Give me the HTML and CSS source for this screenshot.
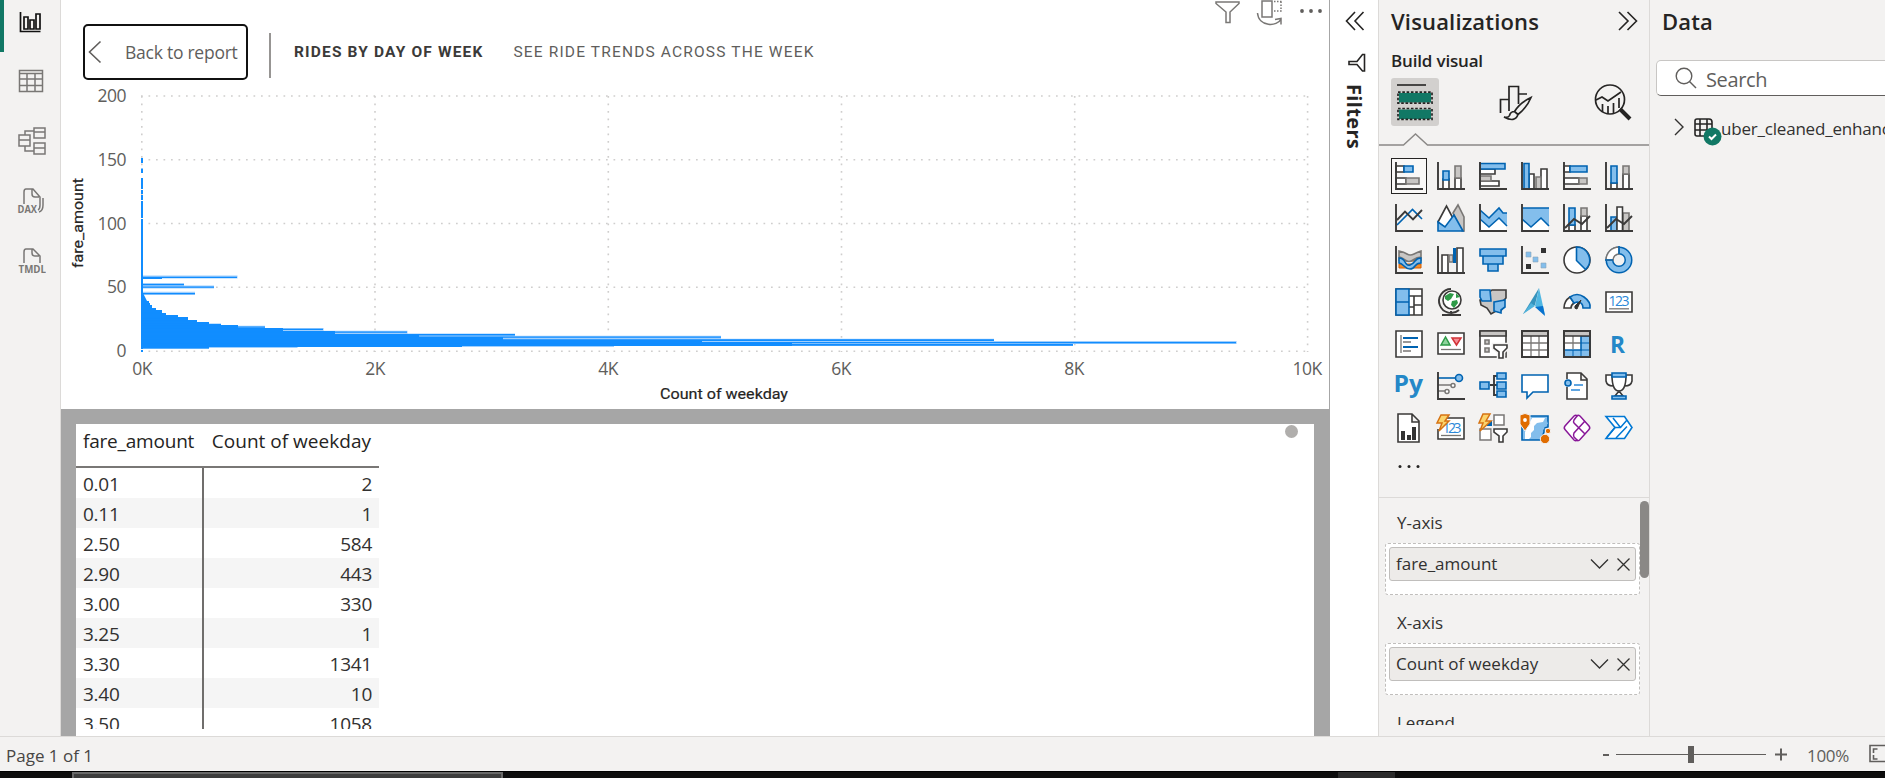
FILE: index.html
```html
<!DOCTYPE html>
<html lang="en">
<head>
<meta charset="utf-8">
<title>Report</title>
<link rel="stylesheet" href="styles.css">
</head>
<body>
<div class="app">
<div class="workspace">
  <nav class="rail">
    <a class="rail-item active"><svg width="28" height="28" viewBox="0 0 28 28"><path d="M4.500 5v19.500h20M8 10h4v12H8zM14 13h4v9h-4zM20 7h4v15h-4z" fill="none" stroke="#111" stroke-width="1.700"/></svg></a>
    <a class="rail-item"><svg width="28" height="28" viewBox="0 0 28 28"><path d="M2.500 3.500h23v21h-23zM2.500 6.500h23M2.500 12h23M2.500 18.500h23M10 6.500v18M18 6.500v18" fill="none" stroke="#797775" stroke-width="1.500"/></svg></a>
    <a class="rail-item"><svg width="30" height="30" viewBox="0 0 30 30"><path d="M18 2h11v10H18zM18 6h11M18 17h11v11H18zM18 22h11M3 9h11v11H3zM3 14h11M9 9V5h9M9 20v5h9" fill="none" stroke="#797775" stroke-width="1.500"/></svg></a>
    <a class="rail-item"><svg width="30" height="30" viewBox="0 0 30 30"><path d="M8 18V6q0-3 2-3h7l7 8v8q0 4-2 5M16 3v5q0 3 3 3h4M27 12v7q0 6-4 7" fill="none" stroke="#797775" stroke-width="1.500"/><text x="1.500" y="27" textLength="19.500" lengthAdjust="spacingAndGlyphs" class="rail-text">DAX</text></svg></a>
    <a class="rail-item"><svg width="30" height="30" viewBox="0 0 30 30"><path d="M8 17V6q0-3 2-3h7l7 7v7M16 3v4q0 3 3 3h4" fill="none" stroke="#797775" stroke-width="1.500"/><text x="2.500" y="27" textLength="27.500" lengthAdjust="spacingAndGlyphs" class="rail-text">TMDL</text></svg></a>
  </nav>

  <main class="canvas">
    <header class="focus-bar">
      <button class="back"><svg width="14" height="24" viewBox="0 0 14 24"><path d="M12.500 1.500L1.500 12l11 10.500" fill="none" stroke="#605e5c" stroke-width="1.600"/></svg><span class="back-label">Back to report</span></button>
      <i class="bar-divider"></i>
      <span class="crumb strong">RIDES BY DAY OF WEEK</span>
      <span class="crumb">SEE RIDE TRENDS ACROSS THE WEEK</span>
      <span class="visual-tools">
        <svg width="26" height="26" viewBox="0 0 26 26"><path d="M1 2h23v1.500l-9 8.500v10.500h-4V12L1 3.500z"/></svg>
        <svg width="28" height="26" viewBox="0 0 28 26"><path d="M6 1h10v16H6z"/><path d="M18 1.500h8M25 1.500v10M18 11h8" stroke-dasharray="1.500 1.500"/><path d="M1.500 13c1 14 20 14 23.500 6M19 19.500l6-1v6"/></svg>
        <svg width="24" height="26" viewBox="0 0 24 26"><g fill="#605e5c" stroke="none"><circle cx="3" cy="11" r="1.900"/><circle cx="12" cy="11" r="1.900"/><circle cx="21" cy="11" r="1.900"/></g></svg>
      </span>
    </header>
    <svg class="chart" width="1268" height="329" viewBox="61 80 1268 329">
      <g class="grid">
        <path d="M141 96H1308M141 159.700H1308M141 223.500H1308M141 287.300H1308M141 351.200H1308"/>
        <path d="M141.800 96V352M375 96V352M608.300 96V352M841.500 96V352M1074.700 96V352M1307.600 96V352"/>
      </g>
      <g class="ylab"><text x="126" y="102">200</text><text x="126" y="166">150</text><text x="126" y="230">100</text><text x="126" y="293">50</text><text x="126" y="357">0</text></g>
      <g class="xlab"><text x="142" y="375">0K</text><text x="375" y="375">2K</text><text x="608" y="375">4K</text><text x="841" y="375">6K</text><text x="1074" y="375">8K</text><text x="1307" y="375">10K</text></g>
      <g fill="#a0cffd">
        <path d="M142 275.500h95.500v3H142zM142 283h42v3.500h-42zM142 285.600h72v3h-72zM142 291.800h53v3.200h-53zM142 325.700h123v3H142zM142 328h181.600v3H142zM142 330.700h265.500v3H142zM142 333.400h373v3H142zM142 335.700h579v3H142zM142 338.700h852v3H142zM142 341h1094.600v3H142zM142 343h931v3H142zM142 345h472v2H142zM142 346h155.500v2H142zM142 347h67v2h-67z"/>
      </g>
      <g fill="#118dff">
        <path d="M141 158h2v5h-2zM141 168.500h2v4.500h-2zM141 178h2v11h-2zM141 190h2v4h-2zM141 195h2v5h-2zM141 201h2v17h-2zM141 219h2v130h-2zM141 350h2v2h-2z"/>
        <path d="M142 276.700h95v1.300H162v1h-20zM142 284h42v1.300h-42zM142 286.400h72v1.300h-72zM142 293h53v1.300h-53z"/>
        <path d="M142 291l3 6 2 4h2v2h1v2h2v3h4v2h6v3h4v2h12v2h10v3h9v2h12v3h29v3h45v3h52v3h84v3h84v3h199v3h90v3H462v1H142z"/>
        <path d="M142 311h20v1.500h-20zM142 313.500h24v1.500h-24zM142 316h36v1.500h-36zM142 318.700h46v1.500h-46zM142 321.400h55v1.500h-55zM142 323.700h79v1.500h-79zM142 326.400h123v1.300H142zM142 328.800h181v1.300H142zM142 331.400h265v1.300H142zM142 334h373v1.500H142zM142 336.500h579v1.300H142zM142 339.300h852v1.700H142zM142 341.900h1094v1.300H142zM142 344h931v1.700H142zM142 347h67v1.500h-67z"/>
      </g>
      <text class="axis-title" x="660" y="399" textLength="128" lengthAdjust="spacingAndGlyphs">Count of weekday</text>
      <text class="axis-title" transform="translate(83 268) rotate(-90)" textLength="90" lengthAdjust="spacingAndGlyphs">fare_amount</text>
    </svg>
    <section class="data-view">
      <div class="sheet">
        <div class="table">
          <div class="tr th"><span>fare_amount</span><span>Count of weekday</span></div>
          <div class="tr"><span>0.01</span><span>2</span></div>
          <div class="tr"><span>0.11</span><span>1</span></div>
          <div class="tr"><span>2.50</span><span>584</span></div>
          <div class="tr"><span>2.90</span><span>443</span></div>
          <div class="tr"><span>3.00</span><span>330</span></div>
          <div class="tr"><span>3.25</span><span>1</span></div>
          <div class="tr"><span>3.30</span><span>1341</span></div>
          <div class="tr"><span>3.40</span><span>10</span></div>
          <div class="tr"><span>3.50</span><span>1058</span></div>
        </div>
        <i class="dot"></i>
      </div>
    </section>
  </main>

  <aside class="filters">
    <svg width="20" height="20" viewBox="0 0 20 20"><path d="M10 1L1.500 10l8.500 9M18.500 1L10 10l8.500 9" fill="none" stroke="#252423" stroke-width="1.600"/></svg>
    <svg class="funnel" width="18" height="20" viewBox="0 0 18 20"><path d="M16.500 1.500v16.500h-2L9 11.500H1v-3h8L14.500 1.500z" fill="none" stroke="#252423" stroke-width="1.600"/></svg>
    <span class="filters-label">Filters</span>
  </aside>

  <aside class="viz">
    <div class="pane-head"><h2>Visualizations</h2><svg width="20" height="20" viewBox="0 0 20 20"><path d="M1 1l9 9-9 9M9.500 1l9 9-9 9" fill="none" stroke="#252423" stroke-width="1.600"/></svg></div>
    <div class="build">Build visual</div>
    <div class="tabs">
      <span class="tab selected"><svg width="48" height="48" viewBox="0 0 48 48"><path d="M6 7h29" stroke="#252423" stroke-width="1.600"/><path fill="#117865" d="M8 15h32v9.500H8zM8 31.500h32V41H8z"/><path fill="none" stroke="#252423" stroke-width="1.700" stroke-dasharray="2.600 1.700" d="M7 14.200h34v10.900H7zM7 30.500h34v10.900H7z"/></svg></span>
      <span class="tab"><svg width="48" height="48" viewBox="0 0 48 48" fill="none" stroke="#252423" stroke-width="1.700"><path d="M10.500 35V21.500h8M19 33V8.500h9.500V26M29 16h8"/><path d="M41 19.500q-11 5-16.500 14l3.500 3q9-7 13-17zM24.500 33.500q-4 0-5 4-1 2.500-5.500 1.500 11 6 14-2.500z"/></svg></span>
      <span class="tab"><svg width="48" height="48" viewBox="0 0 48 48" fill="none" stroke="#252423" stroke-width="1.700"><circle cx="21" cy="21.500" r="14.500"/><path d="M7 22l6-3 6 4 13-9M13.500 26v8M19 28v8M24.500 25v10M30 20v10"/><path d="M31 31l10 10" stroke-width="4"/></svg></span>
    </div>
    <svg class="notch" width="270" height="14" viewBox="0 0 270 14"><path d="M0 12h24.500L36.500 1l12 11H270" fill="none" stroke="#8a8886" stroke-width="1.400"/></svg>
    <div class="gallery">
      <span class="cell chosen"><svg viewBox="0 0 28 28"><path class="w" d="M1 4h8v6H1zM1 16h10v6H1z"/><path class="b" d="M9 4h9v6H9z"/><path class="g" d="M11 16h13v6H11z"/><path class="d" d="M1 0v27h27"/></svg></span>
      <span class="cell"><svg viewBox="0 0 28 28"><path class="w" d="M6 17h6v10H6zM18 16h6v11h-6z"/><path class="b" d="M6 9h6v9H6z"/><path class="g" d="M18 4h6v12h-6z"/><path class="d" d="M1 0v27h27"/></svg></span>
      <span class="cell"><svg viewBox="0 0 28 28"><path class="w" d="M1 7h15v5H1zM1 19h19v5H1z"/><path class="g" d="M1 14h11v5H1z"/><path class="b" d="M1 1.500h25v5.500H1z"/><path class="d" d="M1 0v27h27"/></svg></span>
      <span class="cell"><svg viewBox="0 0 28 28"><path class="w" d="M8 12h5v15H8zM20 7h6v20h-6z"/><path class="g" d="M15 15h5v12h-5z"/><path class="b" d="M3 1.500h5V27H3z"/><path class="d" d="M1 0v27h27"/></svg></span>
      <span class="cell"><svg viewBox="0 0 28 28"><path class="w" d="M1 4h6v6H1zM1 16h15v6H1z"/><path class="b" d="M7 4h17v6H7z"/><path class="g" d="M16 16h8v6h-8z"/><path class="d" d="M1 0v27h27"/></svg></span>
      <span class="cell"><svg viewBox="0 0 28 28"><path class="w" d="M6 21h6v6H6zM18 12h6v15h-6z"/><path class="b" d="M6 4h6v17H6z"/><path class="g" d="M18 4h6v8h-6z"/><path class="d" d="M1 0v27h27"/></svg></span>

      <span class="cell"><svg viewBox="0 0 28 28"><path class="bl" d="M2 21L17.500 5.500 27 15"/><path class="d" d="M2 16l8-8.500 8 8L27 6"/><path class="d" d="M1 0v27h27"/></svg></span>
      <span class="cell"><svg viewBox="0 0 28 28"><path class="g" d="M16 9l5-8 6 12v14h-2z"/><path class="w" d="M1 18L9.500 2 18 18 8 26z"/><path class="b" d="M1 18l7 5 9-12 9 16H1z"/></svg></span>
      <span class="cell"><svg viewBox="0 0 28 28"><path fill="#fff" d="M1 16l9 7 10-8 7 6v6H1z"/><path fill="#83beec" d="M1 6l9 8 10-10 4 5h4v12l-8-7-10 9-9-9z"/><path class="bl" d="M1 6l9 8 10-10 4 5h4M1 15l9 8 10-9 8 8"/><path class="d" d="M1 0v27h27"/></svg></span>
      <span class="cell"><svg viewBox="0 0 28 28"><path fill="#fff" d="M1 16l9 7 10-8 7 6v6H1z"/><path fill="#83beec" d="M1 4h27v18l-8-8-10 9-9-8z"/><path class="bl" d="M1 4h27M1 15l9 8 10-9 8 8"/><path class="d" d="M1 0v27h27"/></svg></span>
      <span class="cell"><svg viewBox="0 0 28 28"><path class="w" d="M6 21h6v6H6zM18 12h6v15h-6z"/><path class="b" d="M6 4h6v17H6z"/><path class="g" d="M18 4h6v8h-6z"/><path class="d" d="M2 24l9-9 8 5 8-8M1 0v27h27"/></svg></span>
      <span class="cell"><svg viewBox="0 0 28 28"><path class="b" d="M6 13h6v14H6z"/><path class="g" d="M18 9h6v18h-6z"/><path class="w" d="M12 3h5.500v24H12z"/><path class="d" d="M2 24l9-9 8 5 8-8M1 0v27h27"/></svg></span>

      <span class="cell"><svg viewBox="0 0 28 28"><path d="M4 11h22v4H4zM4 18h22v4H4z" fill="#ef8b2c" stroke="#d65f00"/><path class="g" d="M4 5q5 1 8 3t7 0 7-3v6q-4 0-8 3t-8 0-6-3z"/><path class="b" d="M4 12q4 0 6 4t5 3 5-4 6-3v5q-4 0-6 3t-5 3-6-3-5-3z"/><path class="d" d="M1 0v27h27"/></svg></span>
      <span class="cell"><svg viewBox="0 0 28 28"><path class="w" d="M5 9h6v18H5zM20 2h6v25h-6z"/><path class="g" d="M12 9h4v7h-4z"/><path fill="#0063b1" d="M16 2h3v15h-3z"/><path class="d" d="M1 0v27h27"/></svg></span>
      <span class="cell"><svg viewBox="0 0 28 28"><path class="b" d="M1 3h26v7H1zM4 10h20v8H4zM9 18h10v7H9z"/></svg></span>
      <span class="cell"><svg viewBox="0 0 28 28"><path fill="#333" d="M20 2h5v5h-5zM5 18h5v5H5z"/><path fill="#83beec" stroke="#8ba4b8" stroke-width=".6" d="M5 6h5v5H5zM12 11h5v5h-5zM20 17h5v5h-5z"/><path class="d" d="M1 0v27h27"/></svg></span>
      <span class="cell"><svg viewBox="0 0 28 28"><circle class="w" cx="14" cy="14" r="13"/><path class="b" d="M13.500 1a13 13 0 0 1 9 22.500l-9-9z"/></svg></span>
      <span class="cell"><svg viewBox="0 0 28 28"><circle cx="14" cy="14" r="9.500" fill="none" stroke="#0063b1" stroke-width="8"/><circle cx="14" cy="14" r="9.500" fill="none" stroke="#83beec" stroke-width="5"/><path d="M1 14A13 13 0 0 1 14 1v7a6 6 0 0 0-6 6z" fill="#fff" stroke="#797775" stroke-width="1.500"/><path class="bl" d="M14 0v8M0 14h8"/></svg></span>

      <span class="cell"><svg viewBox="0 0 28 28"><path class="w" d="M1 1h26v26H1zM14 8h13M19 8v19M19 17h8M14 19h5"/><path class="b" d="M1 1h13v13H1zM1 14h13v13H1z"/></svg></span>
      <span class="cell"><svg viewBox="0 0 28 28"><path class="d" d="M14 1A12 12 0 1 0 22 22M14 23v4M5 27h19"/><circle class="w" cx="15" cy="12" r="9"/><path fill="#2d9a47" d="M8 8l5-3 4 1-3 5-3 2-3-2zM15 13l5-1 1 3-4 5-3-3zM19 5l4 4-4 1z"/></svg></span>
      <span class="cell"><svg viewBox="0 0 28 28"><path class="gd" d="M13 2h14v8l-2 2v6l-4 6-4-1-5 3-4-6-6-3-1-5 5-4z"/><path class="b" d="M1 2h10l1 11H3L1 9zM15 14l11-2v7l-4 3v3l-7-2v-5z"/></svg></span>
      <span class="cell"><svg viewBox="0 0 28 28"><path fill="#3593bd" d="M18 0l-4 17L2 26z"/><path fill="#50b7e2" d="M18 0l6 27-10-9z"/><path fill="#4fb3dc" d="M2 26l12-8-4-3z"/><path fill="#0872ce" d="M22 18l2 10-10-9z"/></svg></span>
      <span class="cell"><svg viewBox="0 0 28 28"><path class="w" d="M1 20Q1 13 7 9l4 6q-3 2-3 5z"/><path class="b" d="M7 9q7-5 14 0t6 11h-7q0-6-6-6l-3 1z"/><path d="M18 12l-6 6q-1 3 2 3z" fill="#333" stroke="#333"/></svg></span>
      <span class="cell"><svg viewBox="0 0 28 28"><path class="w" d="M1 4h26v20H1z"/><text x="3.500" y="18" textLength="21" class="num">123</text><path class="gl" d="M4 20.800h20"/></svg></span>

      <span class="cell"><svg viewBox="0 0 28 28"><path class="w" d="M1 1h26v26H1z"/><path class="gl" d="M6 5v18M8 12h8M8 21h8"/><path d="M8 8h15M8 17h15" stroke="#0063b1" stroke-width="2.200"/></svg></span>
      <span class="cell"><svg viewBox="0 0 28 28"><path class="w" d="M1 3h26v21H1z"/><path d="M4 15l4.500-8 4.500 8z" fill="#8ed39c" stroke="#2d9a47" stroke-width="1.500"/><path d="M15 8h9l-4.500 7z" fill="#f68c95" stroke="#d13438" stroke-width="1.500"/><path class="gl" d="M4 19.500h20"/></svg></span>
      <span class="cell"><svg viewBox="0 0 28 28"><path class="w" d="M1 1h26v26H1z"/><path class="gd" d="M1 1h26v5H1z"/><path class="g" d="M6 10h4v4H6zM6 18h4v4H6z"/><path class="halo" d="M15 15h13v3l-4 4v6h-4v-6l-5-4z"/><path class="w" d="M15 15h13v3l-4 4v6h-4v-6l-5-4z"/></svg></span>
      <span class="cell"><svg viewBox="0 0 28 28"><path class="w" d="M1 1h26v26H1z"/><path class="gl" d="M1 13h26M1 20h26M10 6v21M18 6v21"/><path class="gd" d="M1 1h26v5H1z"/><path class="d" d="M1 1h26v26H1z"/></svg></span>
      <span class="cell"><svg viewBox="0 0 28 28"><path class="w" d="M1 1h26v26H1z"/><path class="gl" d="M1 13h17M10 6v13"/><path class="b" d="M18 6h9v21H1v-7h17z"/><path d="M18 13h9M18 20h9M10 20v7M18 20v7" stroke="#0063b1"/><path class="gd" d="M1 1h26v5H1z"/><path class="d" d="M1 1h26v26H1z"/></svg></span>
      <span class="cell"><svg viewBox="0 0 28 28"><text x="5" y="22.500" textLength="15" lengthAdjust="spacingAndGlyphs" class="lang">R</text></svg></span>

      <span class="cell"><svg viewBox="0 0 28 28"><text x="-1.500" y="20" textLength="29.500" lengthAdjust="spacingAndGlyphs" class="lang">Py</text></svg></span>
      <span class="cell"><svg viewBox="0 0 28 28"><path class="bl" d="M1 6h18"/><circle class="b" cx="22" cy="6" r="3.500"/><path class="gl" d="M1 13h13M1 19h8"/><circle class="gw" cx="16" cy="13.500" r="2"/><circle class="gw" cx="10" cy="19.500" r="2"/><path class="d" d="M1 0v27h27"/></svg></span>
      <span class="cell"><svg viewBox="0 0 28 28"><path class="d" d="M11 13h5M18 4h-3v19h3M15 13h4"/><path class="b" d="M1 10h9v7H1zM18 1h9v6h-9zM18 10h9v7h-9zM18 19h9v6h-9z"/></svg></span>
      <span class="cell"><svg viewBox="0 0 28 28"><path class="bw" d="M1 3h26v17H12l-6 6v-6H1z"/></svg></span>
      <span class="cell"><svg viewBox="0 0 28 28"><path class="w" d="M4 7V1h14l6 6v20H4V15M18 1v7h6"/><circle class="b" cx="5" cy="11" r="3"/><path d="M11 13h9M8 18h9" stroke="#2b88d8" stroke-width="1.500"/></svg></span>
      <span class="cell"><svg viewBox="0 0 28 28"><path class="w" d="M7 3H1v6q1 5 7 5M21 3h6v6q-1 5-7 5M7 3h14q0 16-7 16T7 3zM14 19l-4 5h8z"/><path class="b" d="M7 1h14v4H7zM7 24h14v3H7z"/></svg></span>

      <span class="cell"><svg viewBox="0 0 28 28"><path class="w" d="M3 0h14l7 7v21H3zM17 0v8h7"/><path fill="#333" d="M6 17h4v9H6zM12 21h4v5h-4zM17 13h4v13h-4z"/></svg></span>
      <span class="cell"><svg viewBox="0 0 28 28"><path class="w" d="M9 4h18v21H1V15"/><text x="5.500" y="19" textLength="19" class="num">123</text><path class="gl" d="M4 21.500h20"/><path class="bolt" d="M4 1h8L8 7h4L2 17l3-8H0z"/></svg></span>
      <span class="cell"><svg viewBox="0 0 28 28"><path class="gw" d="M15 1h10v10H15zM1 15h11v11H1z"/><path fill="#0063b1" d="M8 7h5v5H8z"/><path class="bolt" d="M4 0h7L7 7h5L1 17l3-8H0z"/><path class="halo" d="M15 15h13v3l-4 4v6h-4v-6l-5-4z"/><path class="w" d="M15 15h13v3l-4 4v6h-4v-6l-5-4z"/></svg></span>
      <span class="cell"><svg viewBox="0 0 28 28"><path class="b" d="M3 2h24v11l-4 1v4l-3 8H1V14z"/><path d="M11 4h13l-2 4-6 1-3 3v4l-3 3v4l-2 2H4v-7z" fill="#fff"/><path d="M25 4l-2 5-5 1-2 4-4 4 2 2-3 5h6l1-5 5-5 1-4 3-1z" fill="#83beec"/><path fill="#e06c00" stroke="#f3f2f1" d="M-1 1q5-3 10 0v9l-5 7-5-7z"/><circle cx="4" cy="6" r="1.900" fill="#fff"/><circle cx="24" cy="25" r="4.700" fill="#e06c00" stroke="#f3f2f1"/><circle cx="27" cy="17" r="2.700" fill="#e06c00" stroke="#f3f2f1"/></svg></span>
      <span class="cell"><svg viewBox="0 0 28 28"><path d="M11 2q2-1.500 3 0 1-1.500 3 0l9 10q1.500 2 0 3.500l-9 10q-2 2-3 .5-1 1.500-3 0l-9-10.500q-1.500-1.500 0-3.500z" fill="#fff" stroke="#881798" stroke-width="1.500"/><path d="M14 2l-3 4q-1 2 0 3l11 11M14 26l-3-3q-1-2 0-4L22 7" fill="none" stroke="#881798" stroke-width="1.500"/></svg></span>
      <span class="cell"><svg viewBox="0 0 28 28"><path d="M1 2.500h18.500L27 13.500l-7.500 11H1l9-11z" fill="#fff" stroke="#0078d4" stroke-width="1.600"/><path d="M10 13.500h5.500L22 6M2 23l8-9.500M11 24l11-11.500M15.500 13.500L8 4" fill="none" stroke="#0078d4" stroke-width="1.500"/></svg></span>
      <span class="cell"><svg viewBox="0 0 28 28"><g fill="#252423"><circle cx="5" cy="10.500" r="1.500"/><circle cx="14" cy="10.500" r="1.500"/><circle cx="23" cy="10.500" r="1.500"/></g></svg></span>
    </div>
    <div class="wells">
      <i class="thumb"></i>
      <label>Y-axis</label>
      <div class="well"><div class="pill"><span>fare_amount</span><svg width="40" height="16" viewBox="0 0 40 16"><path d="M1 3.500l8.500 8.500L18 3.500M27.500 2.500l12 12M39.500 2.500l-12 12" fill="none" stroke="#323130" stroke-width="1.300"/></svg></div></div>
      <label>X-axis</label>
      <div class="well"><div class="pill"><span>Count of weekday</span><svg width="40" height="16" viewBox="0 0 40 16"><path d="M1 3.500l8.500 8.500L18 3.500M27.500 2.500l12 12M39.500 2.500l-12 12" fill="none" stroke="#323130" stroke-width="1.300"/></svg></div></div>
      <label class="cut">Legend</label>
    </div>
  </aside>

  <aside class="data">
    <h2>Data</h2>
    <div class="search"><svg width="22" height="22" viewBox="0 0 22 22"><circle cx="9" cy="9" r="7.800" fill="none" stroke="#605e5c" stroke-width="1.400"/><path d="M14.500 14.500l6.500 6.500" stroke="#605e5c" stroke-width="1.400"/></svg><span class="search-hint">Search</span></div>
    <div class="node"><svg class="chev" width="10" height="18" viewBox="0 0 10 18"><path d="M1 1l8 8-8 8" fill="none" stroke="#323130" stroke-width="1.400"/></svg>
      <svg class="table-icon" width="28" height="28" viewBox="0 0 28 28"><path d="M3 1h12q3 0 3 3v12q0 2-3 2H3q-2 0-2-2V3q0-2 2-2zM1 6h17M1 12h17M6 1v17M13 1v17" fill="none" stroke="#252423" stroke-width="1.600"/><circle cx="18.500" cy="18.500" r="9" fill="#117865"/><path d="M15 18.500l2.500 2.500 4.500-4.500" fill="none" stroke="#fff" stroke-width="2"/></svg>
      <span>uber_cleaned_enhanced</span></div>
  </aside>
</div>

<footer class="status">
  <span>Page 1 of 1</span>
  <span class="zoom"><svg width="185" height="22" viewBox="0 0 185 22"><path d="M1 12h6M173 11.500h12M179 5.500v12" stroke="#605e5c" stroke-width="2"/><path d="M14 11.500h150" stroke="#605e5c" stroke-width="1.200"/><path d="M86 3h6v17h-6z" fill="#605e5c"/></svg><span class="pct">100%</span><svg width="16" height="20" viewBox="0 0 16 20"><path d="M1 1.500h30v16H1z" fill="none" stroke="#605e5c" stroke-width="1.600"/><path d="M4.500 9V5h4M4.500 11v4h4" fill="none" stroke="#605e5c" stroke-width="1.600"/></svg></span>
</footer>
<div class="taskbar"><i class="task wide"></i><i class="task small"></i></div>
</div>
</body>
</html>
```
FILE: styles.css
```css
* { box-sizing: border-box; }
html, body { margin: 0; height: 100%; overflow: hidden; }
body { font-family: "Open Sans", "Noto Sans", sans-serif; color: #252423; background: #f3f2f1; }
h2 { margin: 0; font-size: 22px; font-weight: 600; line-height: 30px; letter-spacing: .16px; }
svg { display: block; flex: none; }
.app { display: flex; flex-direction: column; width: 1885px; height: 778px; }
.workspace { display: flex; height: 736px; overflow: hidden; }

.rail { width: 61px; border-right: 1px solid #dcdad8; background: #f3f2f1; flex: none; }
.rail-item { display: flex; align-items: center; justify-content: center; height: 60px; padding-bottom: 3px; }
.rail-item.active { height: 52px; border-left: 4px solid #117865; padding: 0 4px 11px 0; }
.rail-item + .rail-item { padding-left: 1px; }
.rail-text { font: 700 10.500px "Open Sans", sans-serif; fill: #797775; stroke: #f3f2f1; stroke-width: 2px; paint-order: stroke; }

.canvas { display: flex; flex-direction: column; width: 1269px; flex: none; background: #fff; border-right: 1px solid #a6a6a6; }
.focus-bar { display: flex; height: 80px; flex: none; padding: 24px 6px 0 22px; }
.back { display: flex; align-items: center; width: 165px; height: 56px; padding: 0 0 0 3px; gap: 23px; background: #fff; border: 2px solid #111; border-radius: 5px; font: 17.500px "Open Sans", sans-serif; letter-spacing: -.25px; color: #605e5c; white-space: nowrap; }
.bar-divider { width: 2px; height: 45px; margin: 9px 23px 0 21px; background: #979593; }
.crumb { font: 15.500px/57px Roboto, sans-serif; letter-spacing: 1.160px; color: #605e5c; white-space: nowrap; margin-right: 30px; align-self: flex-start; }
.crumb.strong { font-weight: 700; color: #3b3a39; }
.visual-tools { display: flex; margin: -24px 0 0 auto; gap: 15px; }
.visual-tools path { fill: none; stroke: #797775; stroke-width: 1.500; }
.chart { font-family: "Open Sans", sans-serif; }
.grid path { fill: none; stroke: #cfcecd; stroke-width: 1.600; stroke-dasharray: 1.700 5.800; }
.ylab { font-size: 17.500px; letter-spacing: -.5px; fill: #605e5c; text-anchor: end; }
.xlab { font-size: 17.500px; letter-spacing: -.5px; fill: #605e5c; text-anchor: middle; }
.axis-title { font: 400 15.500px Roboto, sans-serif; fill: #252423; stroke: #252423; stroke-width: .2px; }

.data-view { flex: 1; background: #a6a6a6; padding: 15px 15px 0; min-height: 0; }
.sheet { height: 100%; background: #fff; display: flex; justify-content: space-between; align-items: flex-start; }
.table { width: 303px; height: 305px; overflow: hidden; font-size: 19px; }
.tr { display: flex; height: 30px; line-height: 33px; letter-spacing: -.25px; color: #323130; }
.tr:nth-child(odd) { background: #f5f5f5; }
.tr > span:first-child { width: 128px; padding-left: 7px; border-right: 2px solid #706e6c; }
.tr > span:last-child { flex: 1; text-align: right; padding-right: 7px; }
.tr > span { height: 30px; }
.tr.th { height: 44px; line-height: 34px; background: #fff; border-bottom: 2px solid #797775; letter-spacing: -.2px; color: #252423; }
.tr.th > span:first-child { border: 0; }
.tr.th > span:last-child { letter-spacing: .02px; padding-right: 8px; }
.dot { width: 13px; height: 13px; border-radius: 50%; background: #b0aeac; margin: 1px 16px 0 0; }

.filters { width: 48px; flex: none; background: #fff; padding: 11px 0 0 15px; }
.funnel { margin: 22px 0 0 3px; }
.filters-label { display: block; writing-mode: vertical-rl; font-weight: 700; font-size: 20px; line-height: 26px; letter-spacing: .35px; margin: 11px 0 0 -4px; }

.viz { width: 271px; flex: none; border-left: 1px solid #dcdad8; display: flex; flex-direction: column; }
.pane-head { display: flex; justify-content: space-between; align-items: center; height: 42px; padding: 0 11px 0 12px; }
.build { padding-left: 12px; height: 36px; line-height: 37px; font-size: 17px; font-weight: 600; letter-spacing: -.17px; }
.tabs { display: flex; gap: 51px; padding-left: 12px; height: 55px; }
.tab { width: 48px; height: 48px; border-radius: 3px; }
.tab.selected { background: #d2d0ce; }
.notch { margin-bottom: 8px; }
.gallery { display: grid; grid-template-columns: repeat(6, 42px); grid-auto-rows: 42px; padding-left: 9px; height: 342px; }
.cell { display: flex; align-items: center; justify-content: center; }
.cell svg { width: 28px; height: 28px; overflow: visible; }
.chosen { border: 1px solid #252423; width: 36px; height: 36px; margin: 3px; background: #f9f8f7; }
.d { fill: none; stroke: #3b3a39; stroke-width: 1.900; }
.w { fill: #fff; stroke: #3b3a39; stroke-width: 1.600; }
.b { fill: #83beec; stroke: #0063b1; stroke-width: 1.600; }
.bl { fill: none; stroke: #0063b1; stroke-width: 1.600; }
.bw { fill: #fff; stroke: #0063b1; stroke-width: 1.600; }
.g { fill: #c8c6c4; stroke: #797775; stroke-width: 1.600; }
.gd { fill: #c8c6c4; stroke: #3b3a39; stroke-width: 1.600; }
.gw { fill: #fff; stroke: #797775; stroke-width: 1.500; }
.gl { fill: none; stroke: #797775; stroke-width: 1.300; }
.halo { fill: #f3f2f1; stroke: #f3f2f1; stroke-width: 4.500; }
.bolt { fill: #fbd36b; stroke: #d67313; stroke-width: 1.500; }
.num { font-size: 14px; fill: #2b88d8; }
.lang { font-weight: 700; font-size: 24px; fill: #2488c8; }

.wells { flex: 1; min-height: 0; border-top: 1px solid #dcdad8; position: relative; padding-left: 6px; overflow: hidden; }
.thumb { position: absolute; right: 0; top: 3px; width: 9px; height: 77px; border-radius: 5px; background: #8a8886; }
.wells label { display: block; height: 45px; line-height: 50px; padding-left: 12px; font-size: 17px; color: #323130; }
.well { width: 255px; height: 52px; padding: 3px; background: #fff; border: 1px dashed #c0bebc; border-radius: 3px; margin-bottom: 3px; }
.pill { display: flex; align-items: center; justify-content: space-between; height: 34px; padding: 0 5px 1px 6px; background: #edebe9; border: 1px solid #c0bebc; border-radius: 3px; font-size: 17px; color: #323130; }
.wells label.cut { height: 27px; overflow: hidden; }

.data { flex: 1; min-width: 0; border-left: 1px solid #dcdad8; overflow: hidden; }
.data h2 { height: 60px; padding: 6px 0 0 12px; }
.search { display: flex; align-items: center; gap: 9px; width: 300px; height: 36px; margin-left: 6px; padding-left: 18px; background: #fff; border: 1px solid #c8c6c4; border-bottom-color: #605e5c; border-radius: 5px; color: #605e5c; font-size: 20px; letter-spacing: -.35px; }
.search-hint { padding-top: 2px; }
.node { display: flex; align-items: center; width: 320px; height: 36px; margin-top: 14px; padding-left: 24px; font-size: 17px; letter-spacing: -.2px; white-space: nowrap; color: #323130; }
.node .chev { margin-right: 10px; margin-top: -2px; }
.node .table-icon { margin: 8px -1px 0 0; }

.status { display: flex; align-items: center; justify-content: space-between; height: 35px; flex: none; border-top: 1px solid #dcdad8; padding: 2px 0 0 6px; font-size: 17px; color: #484644; }
.zoom { display: flex; align-items: center; }
.zoom svg { margin-top: -2px; }
.pct { width: 82px; padding-left: 20px; letter-spacing: -.3px; color: #605e5c; }
.taskbar { display: flex; height: 7px; background: #0d0d0d; border-top: 1px solid #000; padding-left: 72px; }
.task.wide { width: 431px; background: #3d3d3d; border: 2px solid #696969; border-bottom: 0; }
.task.small { width: 57px; margin-left: 835px; background: #2b2b2b; }
```
